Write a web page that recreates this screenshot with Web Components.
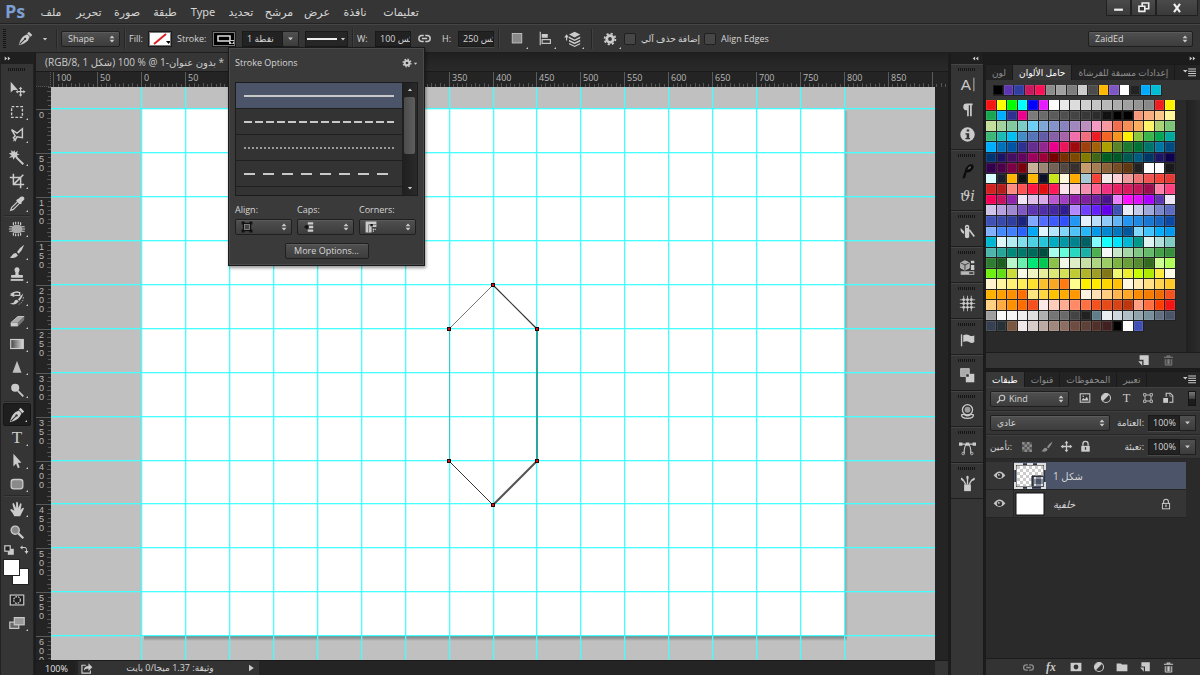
<!DOCTYPE html>
<html lang="en">
<head>
<meta charset="utf-8">
<title>Photoshop workspace</title>
<style>
html,body{margin:0;height:100%}
body{background:#1c1c1c;color:#d6d6d6;font:9px/12px "Open Sans","DejaVu Sans",sans-serif;overflow:hidden;
--bar:#353535;--btn:linear-gradient(#505050,#3c3c3c);--sel:#4b5468}
</style>
</head>
<body>
<ps-app></ps-app>
<script>
const BASE=`*{box-sizing:border-box}button,input,select{font:inherit;color:inherit;margin:0;padding:0;border:0;background:none;border-radius:0}
button{display:flex;align-items:center;justify-content:center}select{appearance:none}`;
function define(name,css,html,init){
  const tpl=document.createElement('template');
  tpl.innerHTML=`<style>${BASE}${css}</style>${html}`;
  customElements.define(name,class extends HTMLElement{
    connectedCallback(){
      if(this.shadowRoot)return;
      this.attachShadow({mode:'open'}).append(tpl.content.cloneNode(true));
      if(init)init(this,this.shadowRoot);
    }
  });
}

/* Icon set: every glyph is drawn on a 20 x 20 grid */
const S='fill="none" stroke="currentColor"';
const ICONS={
move:`<path d="M3 2v12l3-3 5 0z" fill="currentColor"/><path d="M14 7.500l2 2.500h-1.300v2.300H17V11l2.500 2-2.500 2v-1.300h-2.300V16H16l-2 2.500L12 16h1.300v-2.300H11V15l-2.500-2 2.500-2v1.300h2.300V10H12z" fill="currentColor"/>`,
marquee:`<rect x="4" y="4" width="12" height="12" ${S} stroke-width="1.500" stroke-dasharray="3 1.800"/>`,
lasso:`<path d="M4 4l6 4 6-5v10l-6-1-2 4-2-3 2-2z" ${S} stroke-width="1.600"/><path d="M8 13l-2 4" ${S}/>`,
wand:`<path d="M7 1l1 3 3-2-1 3 3 1-3 1 1 4-3-2-2 3-1-3-4 1 3-3-3-2 3-1-1-3 3 2z" fill="currentColor"/><path d="M9 9l8 8" ${S} stroke-width="2.200"/>`,
crop:`<path d="M6 2v12h12M2 6h12v12M6 14l11-11" ${S} stroke-width="1.700"/>`,
eyedrop:`<path d="M3 17l1-3 7-7 2 2-7 7z" ${S} stroke-width="1.300"/><path d="M10 5l2-1 2-2q3-1 4 1t-1 3l-2 2 0 2-2 0-4-4z" fill="currentColor"/>`,
patch:`<rect x="4" y="5.500" width="12" height="9" rx="4" fill="#a8a8a8"/><path d="M6 2.500v3M8.500 2v3M11.500 2v3M14 2.500v3M6 14.500v3M8.500 15v3M11.500 15v3M14 14.500v3M1.500 7.500h3M1 10h3M1.500 12.500h3M15.500 7.500h3M16 10h3M15.500 12.500h3" ${S} stroke-width="1.300"/>`,
brush:`<path d="M18 2q-5 3-8 8l2 2q4-4 6-10z" fill="currentColor"/><path d="M9 11q-3 0-4 2t-3 3q6 2 9-2z" fill="currentColor"/>`,
stamp:`<path d="M8 10q1-3-.5-4.500a2.800 2.800 0 1 1 5 0Q11 7 12 10h4.500v3h-13v-3z" fill="currentColor"/><path d="M3 15.500h14" ${S} stroke-width="2"/>`,
history:`<path d="M17 5q-3 2-6 7l2 1q3-4 4-8z" fill="currentColor"/><path d="M10 12q-3 0-3 2t-5 2q6 3 10-2z" fill="currentColor"/><path d="M3 6q5-4 10-2v3H7" ${S} stroke-width="1.500"/><path d="M2 7l5-3v5z" fill="currentColor"/><path d="M17 9q0 6-5 8" ${S} stroke-dasharray="1.500 1.500"/>`,
eraser:`<path d="M3 12l8-7h7l-7 7z" fill="#aaa"/><path d="M3 12h8v4H3z" fill="currentColor"/><path d="M11 12l7-7v4l-7 7z" fill="#777"/><path d="M3 12l8-7h7" ${S}/>`,
gradient:`<defs><linearGradient id="g"><stop stop-color="#444"/><stop offset="1" stop-color="#ddd"/></linearGradient></defs><rect x="3" y="5" width="14" height="10" fill="url(#g)" stroke="#ccc" stroke-width="1.300"/>`,
sharpen:`<path d="M10 3l5 13.500H5z" fill="#c0c0c0"/>`,
dodge:`<circle cx="8" cy="7.500" r="4.500" fill="currentColor"/><path d="M11 11l6 6" ${S} stroke-width="2"/>`,
pen:`<path d="M2 18q2-8 6-11l4-2 3 3-2 4q-3 4-11 6z" fill="currentColor"/><path d="M12 4l2-2 4 4-2 2z" fill="currentColor"/><path d="M3 17l6-6" stroke="#333" stroke-width="1.200"/><circle cx="9.500" cy="10.500" r="1.300" fill="#333"/>`,
type:`<text x="10" y="16" text-anchor="middle" font-family="Liberation Serif" font-size="19" fill="currentColor">T</text>`,
select:`<path d="M6 2v14l3-3 2 5 2-1-2-5h4z" fill="currentColor"/>`,
rrect:`<rect x="3.500" y="5" width="13" height="10.500" rx="3" fill="#8a8a8a" stroke="currentColor" stroke-width="1.400"/>`,
hand:`<path d="M7 18q-1-3-4-6-1-2 1-2l3 2-2-7q0-2 1.500-1.500L9 9V3q1-2 2 0l.5 6 2-5q1.500-1 1.500 1l-1 6 2-2q2-1 1.500 1-2 4-4 8z" fill="currentColor"/>`,
zoom:`<circle cx="8" cy="8" r="4.500" fill="#888" stroke="currentColor" stroke-width="1.500"/><path d="M11.500 11.500l5.500 5.500" ${S} stroke-width="2.500"/>`,
mask:`<rect x="2.500" y="4.500" width="15" height="11" fill="#222" stroke="currentColor" stroke-width="1.300"/><circle cx="10" cy="10" r="3.700" ${S} stroke-width="1.300" stroke-dasharray="2 1"/>`,
screen:`<rect x="2" y="9" width="10" height="7" fill="#666" stroke="currentColor" stroke-width="1.300"/><rect x="7" y="4" width="11" height="8" fill="#999" stroke="currentColor" stroke-width="1.300"/>`,
mini:`<rect x="8" y="8" width="10" height="10" fill="currentColor"/><rect x="3" y="3" width="9" height="9" fill="#222" stroke="currentColor" stroke-width="2"/>`,
swap:`<path d="M5 5h7q3 0 3 4v5" ${S} stroke-width="2"/><path d="M7 1v8L2 5zM11 12h8l-4 6z" fill="currentColor"/>`,
gear:`<circle cx="10" cy="10" r="4.700" ${S} stroke-width="4"/><circle cx="10" cy="10" r="7.700" ${S} stroke-width="2.600" stroke-dasharray="3 3.050"/>`,
link:`<path d="M9 6H6.500a4 4 0 0 0 0 8H9M11 6h2.500a4 4 0 0 1 0 8H11M6.500 10h7" ${S} stroke-width="2"/>`,
square:`<rect x="4" y="3" width="12" height="12" fill="#8a8a8a" stroke="currentColor"/>`,
align:`<path d="M3 1v18" ${S} stroke-width="1.500"/><rect x="5" y="4" width="8" height="5" fill="currentColor"/><rect x="5.500" y="11.500" width="11" height="5" ${S} stroke-width="1.500"/>`,
layers:`<path d="M12 1l7 3.500L12 8 5 4.500zM5 7l7 3.500L19 7v2l-7 3.500L5 9zM5 11l7 3.500 7-3.500v2l-7 3.500L5 13zM5 15l7 3.500 7-3.500v1.500L12 20l-7-3.500z" fill="currentColor"/><path d="M2 12V7" ${S} stroke-width="1.500"/><path d="M-1 8l3-4 3 4z" fill="currentColor"/>`,
char:`<text x="2" y="16" font-family="Liberation Sans" font-size="18" fill="currentColor">A</text><path d="M17.500 2v16" ${S}/>`,
para:`<path d="M9 3h7v2h-1v13h-2V5h-1.500v13h-2v-7Q5 11 5 7t4-4z" fill="currentColor"/>`,
info:`<circle cx="10" cy="10" r="8.500" fill="currentColor"/><path d="M9 4h3v2.500H9zM7.500 8.500H12V14h1v1.500H7.500V14H9v-4H7.500z" fill="#333"/>`,
brushp:`<path d="M4 19l4-12q4-6 8-4 3 3-1 7-3 3-6 2l-2 7z" fill="#0c0c0c"/><path d="M10 9q1-4 4-4 1 3-4 4z" fill="#5a5a5a"/>`,
glyphs:`<text x="10" y="16" text-anchor="middle" font-family="DejaVu Serif" font-style="italic" font-size="17" fill="currentColor">ϑi</text>`,
knife:`<rect x="7" y="2" width="5" height="16" rx="2.500" fill="currentColor"/><path d="M6 13Q1 11 2 6l4 4z" fill="currentColor"/><path d="M12 8l6 8" ${S} stroke-width="2"/><circle cx="9.500" cy="5" r="1" fill="#333"/>`,
cube:`<path d="M7 2l5 2.500v6L7 13l-5-2.500v-6z" fill="#aaa" stroke="currentColor"/><path d="M2 4.500L7 7l5-2.500M7 7v6" stroke="#333" fill="none"/><path d="M14 2h4v3h-4zM14 7h4v6h-4z" fill="currentColor"/><rect x="2.500" y="15" width="15" height="3" ${S}/><path d="M3 16.500h9" ${S} stroke-width="2"/>`,
grid:`<path d="M5.500 1v18M10 1v18M14.500 1v18M1 5.500h18M1 10h18M1 14.500h18" ${S} stroke-width="1.200" opacity=".8"/><g fill="currentColor"><circle cx="5.500" cy="5.500" r="1.700"/><circle cx="10" cy="5.500" r="1.700"/><circle cx="14.500" cy="5.500" r="1.700"/><circle cx="5.500" cy="10" r="1.700"/><circle cx="10" cy="10" r="1.700"/><circle cx="14.500" cy="10" r="1.700"/><circle cx="5.500" cy="14.500" r="1.700"/><circle cx="10" cy="14.500" r="1.700"/><circle cx="14.500" cy="14.500" r="1.700"/></g>`,
flag:`<path d="M3 4v14" ${S} stroke-width="1.600"/><path d="M5 5q4-2 7 0t6 0v8q-3 2-6 0t-7 0z" fill="currentColor"/>`,
combine:`<rect x="2" y="2" width="10" height="9" fill="#aaa" stroke="currentColor"/><rect x="8" y="8" width="10" height="10" fill="currentColor"/><rect x="8.500" y="8.500" width="3" height="3" fill="#333"/>`,
sphere:`<circle cx="10" cy="8" r="6" ${S} stroke-width="1.500"/><circle cx="10" cy="8" r="3.500" fill="#999"/><path d="M3 14q0 4 7 4t7-4q-3-1-4 0-3 2-6 0-2-1-4 0z" ${S} stroke-width="1.500"/>`,
path:`<path d="M3 6h14M6 17Q6 8 9 6M14 17q0-9-3-11" ${S} stroke-width="1.300"/><path d="M0 4h4v4H0zM8 4h4v4H8zM16 4h4v4h-4z" fill="currentColor"/><circle cx="5" cy="17" r="1.500" ${S}/><circle cx="15" cy="17" r="1.500" ${S}/>`,
brushes:`<path d="M6 11h8v8H6z" fill="currentColor"/><path d="M8 11L5 6M10 11V4M12 11l3-5" ${S} stroke-width="1.500"/><path d="M4 7Q1 5 3 3l3 3zM9 5q-1-4 1-4t1 4zM14 6l4-3q2 3-2 4z" fill="currentColor"/>`,
menu:`<path d="M0 6h7l-3.500 4z" fill="currentColor"/><path d="M8 4.500h12M8 8h12M8 11.500h12M8 15h12" ${S} stroke-width="1.600"/>`,
newdoc:`<path d="M4 2h14v15H10V9H4z" fill="currentColor"/><path d="M2 11h6v7z" fill="currentColor"/>`,
trash:`<path d="M3 5h14M8 5V3h4v2" ${S} stroke-width="1.600"/><path d="M5 8v9h10V8M8 8v8M10 8v8M12 8v8" ${S} stroke-width="1.500"/>`,
image:`<rect x="2" y="3" width="16" height="14" ${S} stroke-width="1.800"/><path d="M4 14l3-4 3 2 3-4 3 6z" fill="currentColor"/><circle cx="7" cy="7" r="1.200" fill="currentColor"/>`,
adjust:`<circle cx="10" cy="10" r="7.500" ${S} stroke-width="1.700"/><path d="M4.700 15.300A7.500 7.500 0 0 1 15.300 4.700z" fill="currentColor"/>`,
shape:`<path d="M5 5h10v10H5z" ${S} stroke-width="1.500"/><path d="M2.500 2.500h4v4h-4zM13.500 2.500h4v4h-4zM2.500 13.500h4v4h-4zM13.500 13.500h4v4h-4z" fill="#444" stroke="currentColor" stroke-width="1.200"/>`,
smart:`<path d="M7 8V2h7l4 4v11h-6" ${S} stroke-width="1.800"/><path d="M13 2v5h5" ${S}/><path d="M2 10h8v8H2z" fill="currentColor"/>`,
search:`<circle cx="12" cy="8" r="5.500" ${S} stroke-width="2.200"/><path d="M8 12l-6 6" ${S} stroke-width="3"/>`,
checker:`<path d="M3 3h14v14H3z" fill="#555"/><path d="M3 3h3.500v3.500H3zM10 3h3.500v3.500H10zM6.500 6.500H10V10H6.500zM13.500 6.500H17V10h-3.500zM3 10h3.500v3.500H3zM10 10h3.500v3.500H10zM6.500 13.500H10V17H6.500zM13.500 13.500H17V17h-3.500z" fill="#8c8c8c"/>`,
cross:`<path d="M10 1l3 4h-2v4h4V7l4 3-4 3v-2h-4v4h2l-3 4-3-4h2v-4H5v2l-4-3 4-3v2h4V5H7z" fill="currentColor"/>`,
lock:`<rect x="3.500" y="9" width="13" height="9" fill="currentColor"/><path d="M6 9V6q0-4 4-4t4 4v3" ${S} stroke-width="2"/><path d="M10 11v4" stroke="#333" stroke-width="2"/>`,
lockline:`<rect x="4" y="9" width="12" height="9" ${S} stroke-width="1.600"/><path d="M6 9V6q0-4 4-4t4 4v3" ${S} stroke-width="1.800"/><path d="M10 11v4" ${S} stroke-width="2"/>`,
eye:`<path d="M1 10q9-12 18 0-9 11-18 0z" fill="#c4c4c4"/><circle cx="10" cy="10" r="4" fill="#333"/><circle cx="9" cy="9" r="1.500" fill="#ccc"/>`,
fx:`<text x="0" y="15" font-family="Liberation Serif" font-style="italic" font-weight="700" font-size="18" fill="currentColor">fx</text>`,
maskbtn:`<path d="M1 3h18v14H1z" fill="currentColor"/><circle cx="10" cy="10" r="4" fill="#333"/>`,
folder:`<path d="M1 4h7l2 2h9v11H1z" fill="currentColor"/>`,
share:`<path d="M9 5H3v12h13v-4" ${S} stroke-width="1.800"/><path d="M6 13q0-7 7-7V2l6 6-6 6v-4q-5 0-7 3z" fill="currentColor"/>`,
min:`<path d="M2 12h16v4H2z" fill="#eee"/>`,
max:`<path d="M8 3h10v9H8z" fill="none" stroke="#eee" stroke-width="2.500"/><path d="M3 8h9v8H3z" fill="#333" stroke="#eee" stroke-width="2.500"/>`,
close:`<path d="M5 3l10 14M15 3L5 17" stroke="#eee" stroke-width="3.500"/>`,
sinside:`<rect x="4" y="4" width="12" height="12" fill="#555" stroke="#111" stroke-width="2"/><path d="M1 1h5v5H1zM14 1h5v5h-5zM1 14h5v5H1zM14 14h5v5h-5z" fill="#111"/><rect x="6" y="6" width="8" height="8" fill="#444" stroke="#999"/>`,
scap:`<path d="M8 2h9v4H8zM8 8h9v4H8zM8 14h9v4H8z" fill="currentColor"/><path d="M2 10h8" stroke="#111" stroke-width="2"/><path d="M4 7h5v6H4z" fill="#111"/>`,
scorner:`<path d="M1 1h18v9h-8v9H1z" fill="currentColor"/><path d="M6 19V6h13" fill="none" stroke="#555" stroke-width="1.200"/><path d="M9 5h4v4H9z" fill="#111"/><path d="M13 13h2v2h-2zM16 13h2v2h-2zM13 16h2v2h-2z" fill="currentColor"/>`,
rr:`<path d="M2 4l7 6-7 6zM11 4l7 6-7 6z" fill="currentColor"/>`,
ll:`<path d="M9 4l-7 6 7 6zM18 4l-7 6 7 6z" fill="currentColor"/>`,
down:`<path d="M3 7h14l-7 8z" fill="currentColor"/>`,
up:`<path d="M3 13h14l-7-8z" fill="currentColor"/>`,
play:`<path d="M5 2l12 8-12 8z" fill="currentColor"/>`,
updown:`<path d="M10 1l6 7H4zM10 19l6-7H4z" fill="currentColor"/>`
};
define('ps-icon',`:host{display:block;flex:none;color:#cbcbcb}svg{display:block;overflow:visible}`,'',(h,r)=>{
  const s=h.getAttribute('size')||16;
  r.innerHTML+=`<svg width="${s}" height="${s}" viewBox="0 0 20 20" aria-hidden="true">${ICONS[h.getAttribute('name')]}</svg>`;
});

/* Drop-down with the double arrow; an icon may be slotted in front */
define('ps-select',`:host{display:grid;height:16px;align-items:center}
select,.f{grid-area:1/1}select{width:100%;height:100%;padding-left:var(--pad,6px);background:var(--btn);border:1px solid #1f1f1f;border-radius:2px;box-shadow:inset 0 1px #5c5c5c}
.f{display:flex;justify-content:space-between;align-items:center;padding:0 4px 0 6px;pointer-events:none}.f ps-icon{margin-left:auto}`,
`<select></select><div class="f"><slot></slot><ps-icon name="updown" size="8"></ps-icon></div>`,(h,r)=>{
  const s=r.querySelector('select');s.setAttribute('aria-label',h.getAttribute('label'));
  const o=document.createElement('option');o.textContent=h.getAttribute('value')||'';s.append(o);
});

/* Numeric text box, optionally with a drop button */
define('ps-field',`:host{display:flex;height:16px}
input{flex:1;min-width:0;width:0;height:100%;padding-left:4px;background:#222;border:1px solid #191919;box-shadow:0 1px #484848}
button{width:16px;background:var(--btn);border:1px solid #1f1f1f;border-left:0}:host(:not([drop])) button{display:none}`,
`<input><button aria-label="Open"><ps-icon name="down" size="7"></ps-icon></button>`,(h,r)=>{
  const i=r.querySelector('input');i.value=h.getAttribute('value');i.setAttribute('aria-label',h.getAttribute('label'));
});

define('ps-grip',`:host{display:block;width:18px;height:3px;background:repeating-linear-gradient(90deg,#151515 0 1px,#353535 1px 2px)}
:host([upright]){width:3px;height:20px;background:repeating-linear-gradient(#151515 0 1px,#353535 1px 2px)}`,'');

define('ps-menubar',`:host{display:flex;height:24px;background:var(--bar);border-bottom:1px solid #232323}
b{width:32px;padding-left:5px;font:700 18px/22px "Open Sans",sans-serif;color:#7c9fd3}
nav{display:flex;flex:1}nav button{width:38px;height:23px;font:11px/16px "Noto Sans","DejaVu Sans",sans-serif;white-space:nowrap}nav button:last-child{width:54px}
.w{display:flex;height:16px;margin-right:2px}.w button{width:25px;background:linear-gradient(#4a4a4a,#3a3a3a);border:1px solid #202020;border-top:0}.w button:last-child{width:42px}`,
`<b>Ps</b><nav></nav><div class="w"><button aria-label="Minimize"><ps-icon name="min" size="11"></ps-icon></button><button aria-label="Restore"><ps-icon name="max" size="13"></ps-icon></button><button aria-label="Close"><ps-icon name="close" size="12"></ps-icon></button></div>`,
(h,r)=>{r.querySelector('nav').innerHTML='ملف,تحرير,صورة,طبقة,Type,تحديد,مرشح,عرض,نافذة,تعليمات'.split(',').map(t=>`<button>${t}</button>`).join('')});

define('ps-options',`:host{display:flex;align-items:center;height:29px;padding:0 7px 0 3px;background:var(--bar);border-top:1px solid #454545;border-bottom:1px solid #1e1e1e;position:relative}
:host>*{flex:none}i{width:1px;height:20px;background:#262626;box-shadow:1px 0 #404040;margin:0 4px}
.sw{width:24px;height:16px;border:1px solid #1a1a1a;outline:1px solid #777;outline-offset:-2px;background:#fff}.sw svg{display:block}
label{display:flex;align-items:center;gap:5px;margin-right:4px;white-space:nowrap}
input{appearance:none;width:12px;height:12px;background:#464646;border:1px solid #202020;border-radius:2px}
.tool{position:relative;width:28px;height:20px;align-items:center;gap:0}.t::after{content:"";position:absolute;right:3px;bottom:0;border:1px solid transparent;border-right-color:#ccc;border-bottom-color:#ccc}
.gap{margin-left:6px}.line{width:43px;height:16px;background:#262626;border:1px solid #191919;gap:3px}
.line span{width:30px;height:2px;background:#eee}.grow{flex:1}
ps-strokes{position:absolute;left:228px;top:22px;z-index:5}`,
`<ps-grip upright></ps-grip><button class="tool gap" style="width:40px;gap:8px" aria-label="Pen tool"><ps-icon name="pen" size="17"></ps-icon><ps-icon name="down" size="6"></ps-icon></button><i></i>
<ps-select label="Mode" value="Shape" style="width:59px"></ps-select><i></i>
<span style="width:19px">Fill:</span><button class="sw" aria-label="Fill"><svg width="22" height="14"><path d="M5 12L17 2" stroke="#e02020" stroke-width="2"/><path d="M17 9h5l-2.500 3z"/></svg></button>
<span style="width:40px;padding-left:5px">Stroke:</span><button class="sw" aria-label="Stroke" style="background:#000"><svg width="22" height="14"><path d="M5 4h12v5H5z" fill="none" stroke="#ddd" stroke-width="1.500"/><path d="M16 8h6v4h-6z" fill="#ccc"/><path d="M17 9h4l-2 3z"/></svg></button>
<ps-field drop label="Stroke width" value="1 نقطة" class="gap" style="width:57px"></ps-field>
<button class="line gap" aria-label="Stroke type"><span></span><ps-icon name="down" size="6"></ps-icon></button><i></i>
<span style="width:18px">W:</span><ps-field label="Width" value="100 بكس" style="width:36px"></ps-field>
<button aria-label="Link" class="gap"><ps-icon name="link" size="15"></ps-icon></button>
<span style="width:26px;padding-left:10px">H:</span><ps-field label="Height" value="250 بكس" style="width:36px"></ps-field>
<i></i><button class="tool t" aria-label="Path operations"><ps-icon name="square" size="16"></ps-icon></button><button class="tool t" aria-label="Path alignment"><ps-icon name="align" size="15"></ps-icon></button><button class="tool t" aria-label="Path arrangement"><ps-icon name="layers" size="16"></ps-icon></button>
<i></i><button class="tool t" aria-label="Settings"><ps-icon name="gear" size="14"></ps-icon></button>
<label><input type="checkbox"><span>إضافة حذف آلي</span></label><label><input type="checkbox"><span>Align Edges</span></label>
<div class="grow"></div><ps-select label="Workspace" value="ZaidEd" style="width:105px"></ps-select><ps-strokes></ps-strokes>`);

define('ps-strokes',`:host{display:block;width:197px;padding:9px 6px 6px;background:#3a3a3a;border:1px solid #1a1a1a;box-shadow:0 0 0 1px #4a4a4a inset,1px 2px 3px #0006}
header{display:flex;justify-content:space-between;align-items:center;height:12px}header button{gap:1px}
.list{display:flex;height:114px;margin-top:13px;border:1px solid #1c1c1c;overflow:hidden}.rows{flex:1}
.rows button{display:block;width:100%;height:26px;padding:0 8px;border-bottom:1px solid #1f1f1f;background:#333}.rows button:first-child{background:var(--sel)}svg{display:block;width:100%;height:4px}
.sb{display:flex;flex-direction:column;align-items:center;justify-content:space-between;width:15px;padding:4px 0;background:linear-gradient(90deg,#1f1f1f,#2a2a2a)}
.sb div{width:11px;height:57px;margin-bottom:28px;background:linear-gradient(90deg,#4c4c4c,#5e5e5e);border-radius:2px}
.c{display:grid;grid-template-columns:repeat(3,57px);gap:3px 5px;margin:8px 0 8px}.c ps-select{height:16px}
.more{width:84px;height:16px;margin:0 auto;background:var(--btn);border:1px solid #1f1f1f;border-radius:2px;box-shadow:inset 0 1px #5c5c5c}`,
`<header><span>Stroke Options</span><button aria-label="Options"><ps-icon name="gear" size="10"></ps-icon><ps-icon name="down" size="5"></ps-icon></button></header>
<div class="list"><div class="rows"></div><div class="sb"><ps-icon name="up" size="6"></ps-icon><div></div><ps-icon name="down" size="6"></ps-icon></div></div>
<div class="c"><span>Align:</span><span>Caps:</span><span>Corners:</span><ps-select label="Align"><ps-icon name="sinside" size="12"></ps-icon></ps-select><ps-select label="Caps"><ps-icon name="scap" size="12"></ps-icon></ps-select><ps-select label="Corners"><ps-icon name="scorner" size="12"></ps-icon></ps-select></div>
<button class="more">More Options...</button>`,(h,r)=>{
  r.querySelector('.rows').innerHTML=['','8 3','2 2','11 8',''].map((d,i)=>`<button aria-label="Stroke ${i+1}"><svg><line x1="0" x2="100%" y1="2" y2="2" stroke="${i==2?'#999':'#c8c8c8'}" stroke-width="2" stroke-dasharray="${d}"/></svg></button>`).join('');
});

define('ps-toolbar',`:host{display:flex;flex-direction:column;width:34px;background:var(--bar);border-right:1px solid #222;border-left:1px solid #222}
.h{height:11px;padding-left:3px;background:#1f1f1f;display:flex;align-items:center}ps-grip{margin:4px auto 6px 7px}
button{position:relative;width:28px;height:23px;margin-left:2px}button.t::after{content:"";position:absolute;right:3px;bottom:3px;border:1px solid transparent;border-right-color:#ccc;border-bottom-color:#ccc}
button.on{background:#1e1e1e;border:1px solid #161616;border-radius:2px}hr{width:26px;height:2px;margin:0 3px;border:0;background:#282828;border-bottom:1px solid #3f3f3f}
.m{display:flex;justify-content:space-between;width:26px;margin-left:2px;height:14px;align-items:center}
.c{display:grid;grid-template:9px 8px 9px/9px 8px 9px;margin:2px 0 3px 2px}.c button{width:auto;height:auto;margin:0;background:#fff;border:1px solid #222}
.fg{grid-area:1/1/3/3;z-index:1}.bg{grid-area:2/2/4/4}`,
`<div class="h"><ps-icon name="rr" size="7"></ps-icon></div><ps-grip></ps-grip><slot></slot>`,(h,r)=>{
  const b=n=>n=='-'?'<hr>':`<button class="${/move|zoom|mask/.test(n)?'':'t'} ${n=='pen'?'on':''}" aria-label="${n}"><ps-icon name="${n}" size="18"></ps-icon></button>`;
  const t=document.createElement('template');
  t.innerHTML='move marquee lasso wand crop eyedrop - patch brush stamp history eraser gradient sharpen dodge - pen type select rrect - hand zoom'.split(' ').map(b).join('')+
  `<div class="m"><ps-icon name="mini" size="12"></ps-icon><ps-icon name="swap" size="10"></ps-icon></div><div class="c"><button class="fg" aria-label="Foreground"></button><button class="bg" aria-label="Background"></button></div>`+b('mask')+b('screen');
  r.querySelector('slot').replaceWith(t.content);
});

/* Rulers: 50 document units span PITCH screen pixels */
const PITCH=43.94,at=(o,k)=>Math.round(o+PITCH*k);
define('ps-ruler',`:host{display:block;overflow:hidden;background:#242424}svg{display:block;width:100%;height:100%}text{font:9px "Open Sans",sans-serif;fill:#b8b8b8}:host([vertical]) text{font-family:"Liberation Sans",sans-serif}`,'<svg></svg>',(h,r)=>{
  const v=h.hasAttribute('vertical'),o=+h.getAttribute('origin');let s='';
  for(let k=v?-1:-2;k<=(v?12:18);k++){
    const p=at(o,k),n=Math.abs(k*50)+'';
    s+=v?`<rect x="0" y="${p}" width="15" height="1" fill="#5a5a5a"/>`:`<rect x="${p}" y="0" width="1" height="15" fill="#5a5a5a"/>`;
    for(let j=1;j<10;j++){const q=at(o,k+j/10),l=j%2?3:4;s+=v?`<rect x="${15-l}" y="${q}" width="${l}" height="1" fill="#555"/>`:`<rect x="${q}" y="${15-l}" width="1" height="${l}" fill="#555"/>`}
    if(v){if(k>=0)[...n].forEach((c,i)=>s+=`<text x="3" y="${p+9+9*i}">${c}</text>`)}
    else if(k<18)s+=`<text x="${p+3}" y="9">${n}</text>`;
  }
  r.querySelector('svg').innerHTML=s;
});

/* The document: artboard, guides and the hexagon path */
define('ps-canvas',`:host{display:block;background:#c0c0c0;overflow:hidden}svg{display:block;width:100%;height:100%}`,'<svg></svg>',(h,r)=>{
  let s='<defs><linearGradient id="b" x2="0" y2="1"><stop stop-color="#777"/><stop offset="1" stop-color="#c0c0c0"/></linearGradient><linearGradient id="r"><stop stop-color="#8c8c8c"/><stop offset="1" stop-color="#c0c0c0"/></linearGradient></defs><rect x="93" y="549" width="703" height="5" fill="url(#b)"/><rect x="793" y="24" width="4" height="526" fill="url(#r)"/><rect x="90" y="22" width="703" height="527" fill="#fff"/>';
  const guide=(a,b,k,o)=>`<rect ${a}="${at(o,k)}" ${b}="100%" ${a=='x'?'width':'height'}="1" fill="#4ff"/><rect ${a}="${at(o,k)+1}" ${b}="100%" ${a=='x'?'width':'height'}="1" fill="#4ff" opacity=".3"/>`;
  for(let k=0;k<17;k++)s+=guide('x','height',k,90);
  for(let k=0;k<13;k++)s+=guide('y','width',k,21);
  s+='<path d="M442 198L398 242" stroke="#777"/><path d="M442 198L486 242" stroke="#333" stroke-width="1.200"/><path d="M398.500 242V374" stroke="#3cc" /><path d="M486 242V374" stroke="#2aa79b" stroke-width="2"/><path d="M398 374l44 44" stroke="#333"/><path d="M486 374l-44 44" stroke="#555" stroke-width="2"/>';
  for(const [x,y] of [[442,198],[398,242],[486,242],[398,374],[486,374],[442,418]])s+=`<rect x="${x-2}" y="${y-2}" width="4" height="4" fill="#2a0000"/><rect x="${x-1}" y="${y-1}" width="2" height="2" fill="#e01010"/>`;
  r.querySelector('svg').innerHTML=s;
});

define('ps-document',`:host{display:grid;grid-template:19px 15px 1fr 15px/15px 1fr 13px;min-width:0;min-height:0;background:#242424}
.tab{grid-column:1/-1;display:flex;background:linear-gradient(#202020,#2a2a2a);border-bottom:1px solid #1a1a1a}
.tab button{width:210px;padding-left:9px;background:#363636;justify-content:flex-start;font-size:10px;white-space:nowrap;overflow:hidden;color:#ccc}
ps-canvas{grid-area:3/2}.corner{background:#2a2a2a;border-right:1px dotted #555;border-bottom:1px dotted #555}.top{grid-area:2/2/3/4}
footer{grid-area:4/1/5/4;display:flex;align-items:center;background:#242424;border-top:1px solid #1a1a1a}
input{width:39px;height:14px;padding-left:9px;background:#202020;color:#e4e4e4}.info{display:flex;align-items:center;width:181px;height:14px;margin-left:3px;padding:0 4px 0 2px;background:#333}.info span{flex:1;text-align:center}
.end{width:13px;height:14px;margin-left:auto;background:#353535}`,
`<div class="tab"><button><bdo dir="rtl" style="unicode-bidi:isolate">* بدون عنوان-1 @ % 100 (شكل 1 ,RGB/8)</bdo></button></div><div class="corner"></div><ps-ruler class="top" origin="90"></ps-ruler>
<ps-ruler vertical origin="22"></ps-ruler><ps-canvas></ps-canvas>
<footer><input aria-label="Zoom" value="100%"><div class="info"><ps-icon name="share" size="13"></ps-icon><span dir="rtl">وثيقة: 1.37 ميجا/0 بايت</span><ps-icon name="play" size="8"></ps-icon></div><div class="end"></div></footer>`);

define('ps-dock',`:host{display:flex;flex-direction:column;width:34px;background:var(--bar);border-left:1px solid #1a1a1a;border-right:1px solid #1a1a1a}
.h{height:11px;background:#1f1f1f;display:flex;justify-content:flex-end;align-items:center;padding-right:4px}
section{padding:3px 0 2px;border-bottom:1px solid #1d1d1d;box-shadow:inset 0 1px #454545}section ps-grip{margin:1px 0 1px 7px}button{width:100%;height:25px}`,
`<div class="h"><ps-icon name="ll" size="7"></ps-icon></div>`,(h,r)=>{
  const t=document.createElement('template');
  t.innerHTML='char para info,brushp glyphs,knife,cube,grid,flag,combine,sphere,path,brushes'.split(',').map(g=>`<section><ps-grip></ps-grip>${g.split(' ').map(n=>`<button aria-label="${n}"><ps-icon name="${n}" size="17"></ps-icon></button>`).join('')}</section>`).join('');
  r.append(t.content);
});

/* Panel with a row of tabs; the body is slotted */
define('ps-panel',`:host{display:flex;flex-direction:column;background:var(--bar)}
.t{display:flex;height:16px;background:#232323;border-top:1px solid #1a1a1a}.t button{padding:0 6px;border-right:1px solid #191919;color:#8c8c8c;white-space:nowrap}.t button.on{background:#383838;color:#fff}
.t ps-icon{margin:1px 4px 0 auto}`,`<div class="t" role="tablist"></div><slot></slot>`,(h,r)=>{
  r.querySelector('.t').innerHTML=h.getAttribute('tabs').split(',').map(t=>`<button role="tab" class="${t[0]=='*'?'on':''}">${t.replace('*','')}</button>`).join('')+'<ps-icon name="menu" size="13"></ps-icon>';
});

const RECENT='000000 5e35b1 303f9f c81860 fb1158 8c8c8c a0a0a0 7c7c7c cccccc 4c4c4c ffb900 7e57c2 ffffff 222222 00aaff 00bcd4';
const SWATCHES=`f41414 ffff00 00ff00 00ffff 0000ff e61aff ffffff e8e8e8 dcdcdc d0d0d0 c4c4c4 b8b8b8 acacac a0a0a0 949494 888888 f01c20 fff200
19a650 00aeff 2e3192 ec008c 7b7b7b 6b6b6b 5b5b5b 4f4f4f 444444 383838 2c2c2c 111111 000000 000000 f7977a f9ad81 fdc689 fff799
c4df9b a2d39c 82ca9d 7bcdc8 6ecff6 7ea7d8 8493ca 8882be a187be bc8dbf f49ac2 f6989d f26c4f f68e55 fbaf5c fff467 acd372 7cc576
3bb878 1abbb4 00bff3 438cca 5574b9 605ca8 855fa8 a763a8 f06ea9 f26d7d ed1c24 f26522 f7941d fff200 8dc73f 39b54a 00a651 00a99d
00aeff 0072bc 0054a6 2e3192 662d91 92278f ec008c ed145b 9e0b0f a0410d a36209 aba000 598527 1a7b30 007236 00746b 0076a3 004b80
003471 1b1464 440e62 630460 9e005d 9e0039 790000 7b2e00 7d4900 827b00 406618 005e20 005826 005952 005b7f 003663 1b1464 0d004c
32004b 4b0049 7b0046 7a0010 c7b299 998675 736357 534741 37302d c69c6d a67c52 8c6239 754c24 603913 222222 ffffff ffffff 1a1a1a
d9ffff 1a1f2e ffb400 111111 ffb900 0c1028 c8e81c fff8dc ffab00 a5c8d4 f44336 f3eaea fcd0d4 ef9a9a ee7474 ef5350 f44336 e53935
d32020 b71c1c ff8a80 ff5252 ff1744 e01010 ff1857 fce4ec fccdd9 f48fb1 ff6090 f03080 e91e63 d81b60 c2185b 980e4f ff80ab ff4081
f50057 c51162 8e24aa f3e5f5 e1bee7 d8a8e8 ba58d0 a040c0 9320a8 8020a0 7020a0 4a148c ea80fc ff10ff e010ff aa00ff 5e35b1 ede7f6
d1c4e9 b8a0e0 a088d0 7e57c2 5e35b1 512da8 4527a0 311b92 b388ff 7040ff 651fff 6200ea 3f51b5 e8eaf6 c5cae9 9fa8da 7986cb 5c6bc0
3f51b5 3949ab 303f9f 1a237e 80a8ff 536dfe 3d5afe 304ffe 2196f3 e3f2fd bbdefb 90caf9 64b5f6 2196f3 1e88e5 1976d2 1565c0 0d47a1
82b1ff 448aff 4080ff 2962ff 03a9f4 e1f5fe b3e5fc 81d4fa 4fc3f7 29b6f6 0398e8 0288d1 0277bd 01579b 80d8ff 40c4ff 00b0ff 0099f0
00b8d4 e0f7fa b2ebf2 80deea 4dd0e1 26c6da 00acc1 0097a7 00838f 006064 84ffff 18ffff 00e5ff 00b8d4 009688 e0f2f1 b2dfdb 80cbc4
4db6ac 26a69a 00897b 00796b 00695c 004d40 a7ffeb 64ffda 26d8c0 1ab0a8 4caf50 f8f8f8 c8e6c9 a5d6a7 81c784 66bb6a 43a047 388e3c
2e7d32 1b5e20 b9f6ca 69f0ae 00e676 00c853 8bc34a f1f8e9 dcedc8 c5e1a5 aed581 9ccc65 7cb342 689f38 558b2f 33691e ccff90 b2ff59
70f010 64dd17 cddc39 f9fbe7 f0f4c3 e6ee9c dce775 d4e157 c0ca33 afb42b 9e9d24 827717 f0f870 eeee30 c6ff00 aeea00 ffeb3b fffde7
fff3d0 fff59d fff176 ffee58 ffe030 fbc02d f9a825 ff7a10 ffff8d fff000 ffea00 ffd600 ffc107 fff8e1 ffecb3 ffe082 ffd54f ffca28
ffb300 ffa000 ff8f00 ff6f00 ffe57f ffd740 ffc400 ffab00 ff9800 fff3e0 ffe0b2 ffcc80 ffb74d ffa726 fb8c00 f57c00 ef6c00 f4511e
ffd180 ffab40 ff9100 ff6d00 f4511e fbe9e7 ffccbc ffab91 ff8a65 ff7043 f4511e e64a19 d84315 bf360c ff9e80 ff6e40 ff3d00 f41414
9e9e9e fafafa f5f5f5 eeeeee e0e0e0 b0b0b0 757575 6a6a6a 444444 212121 607d8b eceff1 cfd8dc b0bec5 90a4ae 78909c 607080 4a5468
374050 263238 7a5840 f0e8e8 d7ccc8 bcaaa4 a1887f 8d6e63 6d4c41 5d4037 503028 402020 000000 ffffff 3f51b5`;
define('ps-swatches',`:host{display:block}.r,.g{display:grid}.r{grid-template-columns:repeat(16,1fr);width:169px;height:20px;padding:5px 0 4px;margin-left:7px}
.g{grid-template:repeat(22,1fr)/repeat(18,1fr);width:190px;height:232px}.body{display:flex;justify-content:space-between;height:252px;background:#2a2a2a}
.sb{width:14px;background:linear-gradient(90deg,#202020,#2c2c2c)}
button{border:1px solid #222;border-width:0 1px 1px 0;box-shadow:inset 0 0 0 1px #ffffff18}
footer{display:flex;justify-content:flex-end;align-items:center;gap:12px;height:17px;padding-right:25px;border-top:1px solid #1c1c1c;border-bottom:1px solid #1a1a1a}`,
`<div class="r"></div><div class="body"><div class="g"></div><div class="sb"></div></div><footer><ps-icon name="newdoc" size="13"></ps-icon><ps-icon name="trash" size="13" style="opacity:.5"></ps-icon></footer>`,(h,r)=>{
  const f=s=>s.split(/\s+/).map(c=>`<button aria-label="#${c}" style="background:#${c}"></button>`).join('');
  r.querySelector('.r').innerHTML=f(RECENT);r.querySelector('.g').innerHTML=f(SWATCHES);
});

define('ps-layer',`:host{display:flex;align-items:center;height:28px;margin-right:14px;background:#353535;border-bottom:1px solid #242424}:host([active]){background:var(--sel)}
.e{width:28px;height:100%;background:#353535;border-right:1px solid #252525}svg{display:block;flex:none;width:32px;height:26px;margin-right:7px}
:host(:not([active])) .a{display:none}.n{flex:1;font-size:10px}:host(:not([active])) .n{font-style:italic}:host([active]) .k{display:none}.k{margin-right:14px}`,
`<button class="e" aria-label="Visibility"><ps-icon name="eye" size="13"></ps-icon></button>
<svg viewBox="0 0 32 26"><defs><pattern id="c" width="6" height="6" patternUnits="userSpaceOnUse"><path d="M0 0h3v3H0zM3 3h3v3H3z" fill="#ccc"/></pattern></defs><rect x="2" y="2" width="28" height="22" fill="#fff" stroke="#111"/>
<g class="a"><rect x="3" y="3" width="26" height="20" fill="url(#c)"/><path d="M18 24V13h12v11z" fill="#4b5468"/><path d="M18 23V13h11" fill="none" stroke="#111"/><path d="M1 7V1h8M13 1h6M23 1h8v6M1 19v6h8M13 25h5M31 19v6h-4" fill="none" stroke="#ddd" stroke-width="2"/><path d="M21 15h7v7h-7z" fill="none" stroke="#ccc"/><path d="M20 14h2v2h-2zM27 14h2v2h-2zM20 21h2v2h-2zM27 21h2v2h-2z" fill="#ddd"/></g></svg>
<span class="n"><slot></slot></span><ps-icon class="k" name="lockline" size="12"></ps-icon>`);

define('ps-layers',`:host{display:flex;flex-direction:column;flex:1;min-height:0}
.row{display:flex;align-items:center;height:24px;padding:0 4px;border-bottom:1px solid #262626;box-shadow:inset 0 1px #404040;white-space:nowrap}
.f{display:flex;flex:1;justify-content:space-between;padding:0 14px 0 10px}.tg{width:8px;height:15px;background:linear-gradient(#777 0,#444 50%,#1c1c1c 50%);border:1px solid #151515}
.l{flex:1;text-align:right;padding-right:4px}.wrap{display:flex;flex-direction:column;flex:1;padding-top:3px;background:#2a2a2a}
footer{display:flex;justify-content:flex-end;align-items:center;gap:11px;height:17px;padding-right:25px;background:#333;border-top:1px solid #1c1c1c}.lk{display:flex;gap:6px;padding-left:8px}`,
`<div class="row"><ps-select label="Filter" value="Kind" style="width:79px;--pad:18px"><ps-icon name="search" size="10"></ps-icon></ps-select><div class="f"><ps-icon name="image" size="12"></ps-icon><ps-icon name="adjust" size="12"></ps-icon><ps-icon name="type" size="13"></ps-icon><ps-icon name="shape" size="12"></ps-icon><ps-icon name="smart" size="12"></ps-icon></div><button class="tg" aria-label="Filter on"></button></div>
<div class="row"><ps-select label="Blend mode" value="عادي" style="width:120px"></ps-select><span class="l">العتامة:</span><ps-field drop label="Opacity" value="100%" style="width:48px"></ps-field></div>
<div class="row"><span>تأمين:</span><div class="lk"><ps-icon name="checker" size="14"></ps-icon><ps-icon name="brush" size="14" style="opacity:.6"></ps-icon><ps-icon name="cross" size="13"></ps-icon><ps-icon name="lock" size="13"></ps-icon></div><span class="l">تعبئة:</span><ps-field drop label="Fill" value="100%" style="width:48px"></ps-field></div>
<div class="wrap"><ps-layer active><bdi dir="rtl">شكل 1</bdi></ps-layer><ps-layer><bdi>خلفية</bdi></ps-layer></div>
<footer><ps-icon name="link" size="13" style="opacity:.6"></ps-icon><ps-icon name="fx" size="13"></ps-icon><ps-icon name="maskbtn" size="12"></ps-icon><ps-icon name="adjust" size="12"></ps-icon><ps-icon name="folder" size="12"></ps-icon><ps-icon name="newdoc" size="12"></ps-icon><ps-icon name="trash" size="13"></ps-icon></footer>`);

define('ps-app',`:host{display:flex;flex-direction:column;height:100vh;padding-bottom:2px}
main{display:grid;grid-template-columns:34px 1fr 34px 214px;column-gap:2px;flex:1;min-height:0}
aside{display:flex;flex-direction:column;min-height:0}.h{display:flex;justify-content:flex-end;align-items:center;height:11px;padding-right:4px}.b{flex:1;min-height:0;margin-top:2px}`,
`<ps-menubar></ps-menubar><ps-options></ps-options><main><ps-toolbar></ps-toolbar><ps-document></ps-document><ps-dock></ps-dock>
<aside><div class="h"><ps-icon name="rr" size="7"></ps-icon></div><ps-panel tabs="لون,*حامل الألوان,إعدادات مسبقة للفرشاة"><ps-swatches></ps-swatches></ps-panel><ps-panel class="b" tabs="*طبقات,قنوات,المحفوظات,تعبير"><ps-layers></ps-layers></ps-panel></aside></main>`);
</script>
</body>
</html>
